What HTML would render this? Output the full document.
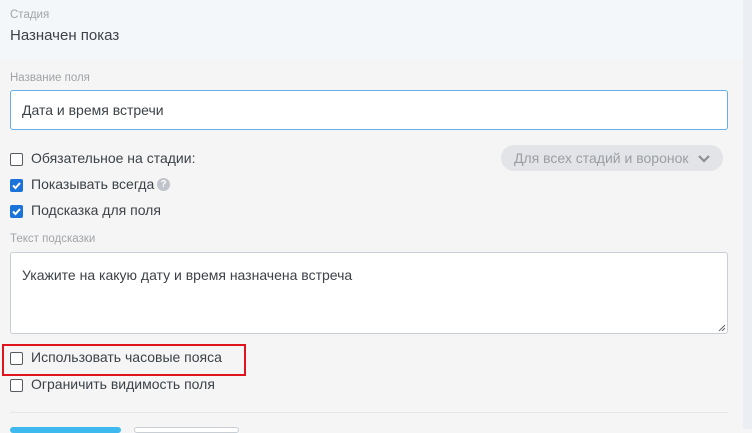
<!DOCTYPE html>
<html><head><meta charset="utf-8"><style>
*{box-sizing:border-box;margin:0;padding:0}
body{width:752px;height:429px;overflow:hidden;background:#f5f5f5;font-family:"Liberation Sans","DejaVu Sans",sans-serif;color:#333;position:relative}
.a{position:absolute}
.top{left:0;top:0;width:743px;height:59px;background:#f4f7f9}
.strip{left:743px;top:0;width:9px;height:429px;background:#ebeef2}
.lbl{font-size:11.5px;color:#a0a4a8}
.t{font-size:14px;color:#3c4248}
.cb{width:13px;height:13px;border:1px solid #555b61;border-radius:2px;background:#fff}
.cb.on{background:#1a73d9;border-color:#1a73d9}
</style></head><body>
<div class="a top"></div>
<div class="a strip"></div>
<div class="a lbl" style="left:10px;top:9px">Стадия</div>
<div class="a t" style="left:10px;top:27px;font-size:15px">Назначен показ</div>
<div class="a lbl" style="left:10px;top:72px">Название поля</div>
<div class="a" style="left:10px;top:90px;width:718px;height:40px;background:#fff;border:1px solid #66aee8;border-radius:3px"></div>
<div class="a t" style="left:22px;top:102px">Дата и время встречи</div>
<div class="a cb" style="left:10px;top:153px"></div>
<div class="a t" style="left:31px;top:150px">Обязательное на стадии:</div>
<div class="a" style="left:501px;top:145px;width:222px;height:26px;background:#e2e4e8;border-radius:13px"></div>
<div class="a" style="left:514px;top:150px;font-size:14px;color:#9a9ea3">Для всех стадий и воронок</div>
<svg class="a" style="left:697px;top:154px" width="14" height="10"><path d="M2 2l5 5 5-5" fill="none" stroke="#8a8f96" stroke-width="2.2"/></svg>
<div class="a cb on" style="left:10px;top:179px"></div>
<svg class="a" style="left:10px;top:179px" width="13" height="13"><path d="M3 6.5l2.5 2.5 4.5-5" fill="none" stroke="#fff" stroke-width="2"/></svg>
<div class="a t" style="left:31px;top:176px">Показывать всегда</div>
<div class="a" style="left:157px;top:178px;width:13px;height:13px;border-radius:50%;background:#c0c4ca;color:#fff;font-size:10px;font-weight:bold;text-align:center;line-height:13px">?</div>
<div class="a cb on" style="left:10px;top:205px"></div>
<svg class="a" style="left:10px;top:205px" width="13" height="13"><path d="M3 6.5l2.5 2.5 4.5-5" fill="none" stroke="#fff" stroke-width="2"/></svg>
<div class="a t" style="left:31px;top:202px">Подсказка для поля</div>
<div class="a lbl" style="left:10px;top:233px">Текст подсказки</div>
<div class="a" style="left:10px;top:252px;width:718px;height:82px;background:#fff;border:1px solid #c8ced4;border-radius:3px"></div>
<div class="a t" style="left:22px;top:267px">Укажите на какую дату и время назначена встреча</div>
<svg class="a" style="left:718px;top:324px" width="8" height="8"><path d="M1 7L7 1M4 7L7 4" stroke="#666" stroke-width="1"/></svg>
<div class="a" style="left:2px;top:344px;width:244px;height:32px;border:2px solid #e0141c"></div>
<div class="a cb" style="left:10px;top:352px"></div>
<div class="a t" style="left:31px;top:349px">Использовать часовые пояса</div>
<div class="a cb" style="left:10px;top:379px"></div>
<div class="a t" style="left:31px;top:376px">Ограничить видимость поля</div>
<div class="a" style="left:10px;top:412px;width:718px;height:1px;background:#e4e6e8"></div>
<div class="a" style="left:10px;top:427px;width:111px;height:6px;background:#3db9f0;border-radius:3px"></div>
<div class="a" style="left:134px;top:427px;width:105px;height:6px;background:#fff;border:1px solid #c8ced4;border-radius:3px"></div>
</body></html>
